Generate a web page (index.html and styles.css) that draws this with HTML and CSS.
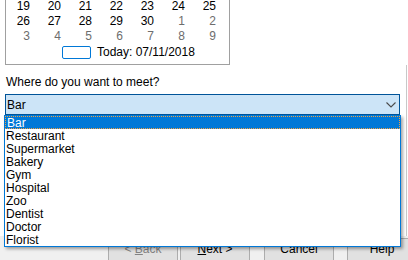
FILE: index.html
```html
<!DOCTYPE html>
<html>
<head>
<meta charset="utf-8">
<link rel="stylesheet" href="styles.css">
</head>
<body>
<div class="page">
  <div class="calendar">
    <div class="days">
      <span>19</span><span>20</span><span>21</span><span>22</span><span>23</span><span>24</span><span>25</span>
      <span>26</span><span>27</span><span>28</span><span>29</span><span>30</span><span class="other">1</span><span class="other">2</span>
      <span class="other">3</span><span class="other">4</span><span class="other">5</span><span class="other">6</span><span class="other">7</span><span class="other">8</span><span class="other">9</span>
    </div>
    <div class="today">
      <span class="today-box"></span>
      <span class="today-text">Today: 07/11/2018</span>
    </div>
  </div>
  <div class="pane">
    <div class="label">Where do you want to meet?</div>
    <div class="combo">
      <span class="combo-value">Bar</span>
      <svg class="chevron" width="10" height="6" viewBox="0 0 10 6"><path d="M0.5 0.5 L5 5 L9.5 0.5" fill="none" stroke="#4a4a4a" stroke-width="1.1"/></svg>
    </div>
  </div>
  <div class="footer">
    <div class="btn btn-back disabled">&lt; <u>B</u>ack</div>
    <div class="btn btn-next"><u>N</u>ext &gt;</div>
    <div class="btn btn-cancel">Cancel</div>
    <div class="btn btn-help">Help</div>
  </div>
  <ul class="dropdown">
    <li class="selected">Bar</li>
    <li>Restaurant</li>
    <li>Supermarket</li>
    <li>Bakery</li>
    <li>Gym</li>
    <li>Hospital</li>
    <li>Zoo</li>
    <li>Dentist</li>
    <li>Doctor</li>
    <li>Florist</li>
  </ul>
</div>
</body>
</html>
```
FILE: styles.css
```css
html, body {
  margin: 0;
  padding: 0;
  background: #ffffff;
}
body {
  width: 408px;
  height: 260px;
  overflow: hidden;
  font-family: "Liberation Sans", Arial, sans-serif;
  font-size: 12px;
  color: #000000;
}
.page {
  position: relative;
  width: 408px;
  height: 260px;
  overflow: hidden;
}
.calendar {
  margin: 0 0 0 5px;
  width: 223px;
  border: 1px solid #a0a0a0;
  border-top: none;
  padding-bottom: 4px;
}
.days {
  display: grid;
  grid-template-columns: repeat(7, 31px);
  grid-auto-rows: 12px;
  row-gap: 3px;
  line-height: 12px;
}
.days span {
  text-align: right;
  padding-right: 7px;
}
.days .other {
  color: #6d6d6d;
}
.today {
  display: flex;
  align-items: center;
  height: 15px;
  padding-top: 3px;
  line-height: 15px;
}
.today-box {
  width: 27px;
  height: 11px;
  margin-left: 56px;
  border: 1px solid #0078d7;
  border-radius: 2px;
}
.today-text {
  margin-left: 6px;
}
.pane {
  width: 406px;
  height: 171px;
  border-right: 1px solid #c8c8c8;
  overflow: hidden;
}
.label {
  margin: 10px 0 0 6px;
  line-height: 15px;
}
.combo {
  margin: 4px 0 0 5px;
  width: 393px;
  height: 17px;
  padding-top: 2px;
  border: 1px solid #005499;
  background: #cce4f7;
  display: flex;
  align-items: flex-start;
  justify-content: space-between;
  line-height: 17px;
}
.combo-value {
  padding-left: 1px;
}
.chevron {
  margin-right: 3px;
  margin-top: 5px;
}
.footer {
  height: 22px;
  padding: 2px 0 0 108px;
  background: #f0f0f0;
  display: flex;
  align-items: flex-start;
}
.btn {
  flex: none;
  width: 68px;
  height: 21px;
  border: 1px solid #adadad;
  background: #e1e1e1;
  text-align: center;
  line-height: 21px;
  color: #000000;
}
.btn u {
  text-decoration: underline;
}
.btn.disabled {
  color: #838383;
}
.btn-next {
  margin-left: 2px;
}
.btn-cancel {
  margin-left: 14px;
}
.btn-help {
  margin-left: 13px;
}
.dropdown {
  position: absolute;
  top: 115px;
  left: 4px;
  width: 395px;
  margin: 0;
  padding: 0;
  list-style: none;
  border: 1px solid #0078d7;
  background: #ffffff;
  box-shadow: 2px 2px 3px rgba(0, 0, 0, 0.35);
}
.dropdown li {
  height: 12px;
  padding-top: 1px;
  line-height: 12px;
  padding-left: 1px;
  white-space: nowrap;
}
.dropdown li.selected {
  height: 10px;
  padding-top: 1px;
  line-height: 10px;
  padding-left: 1px;
  background: #0078d7;
  color: #ffffff;
  border: 1px dotted #f0a040;
}
```
